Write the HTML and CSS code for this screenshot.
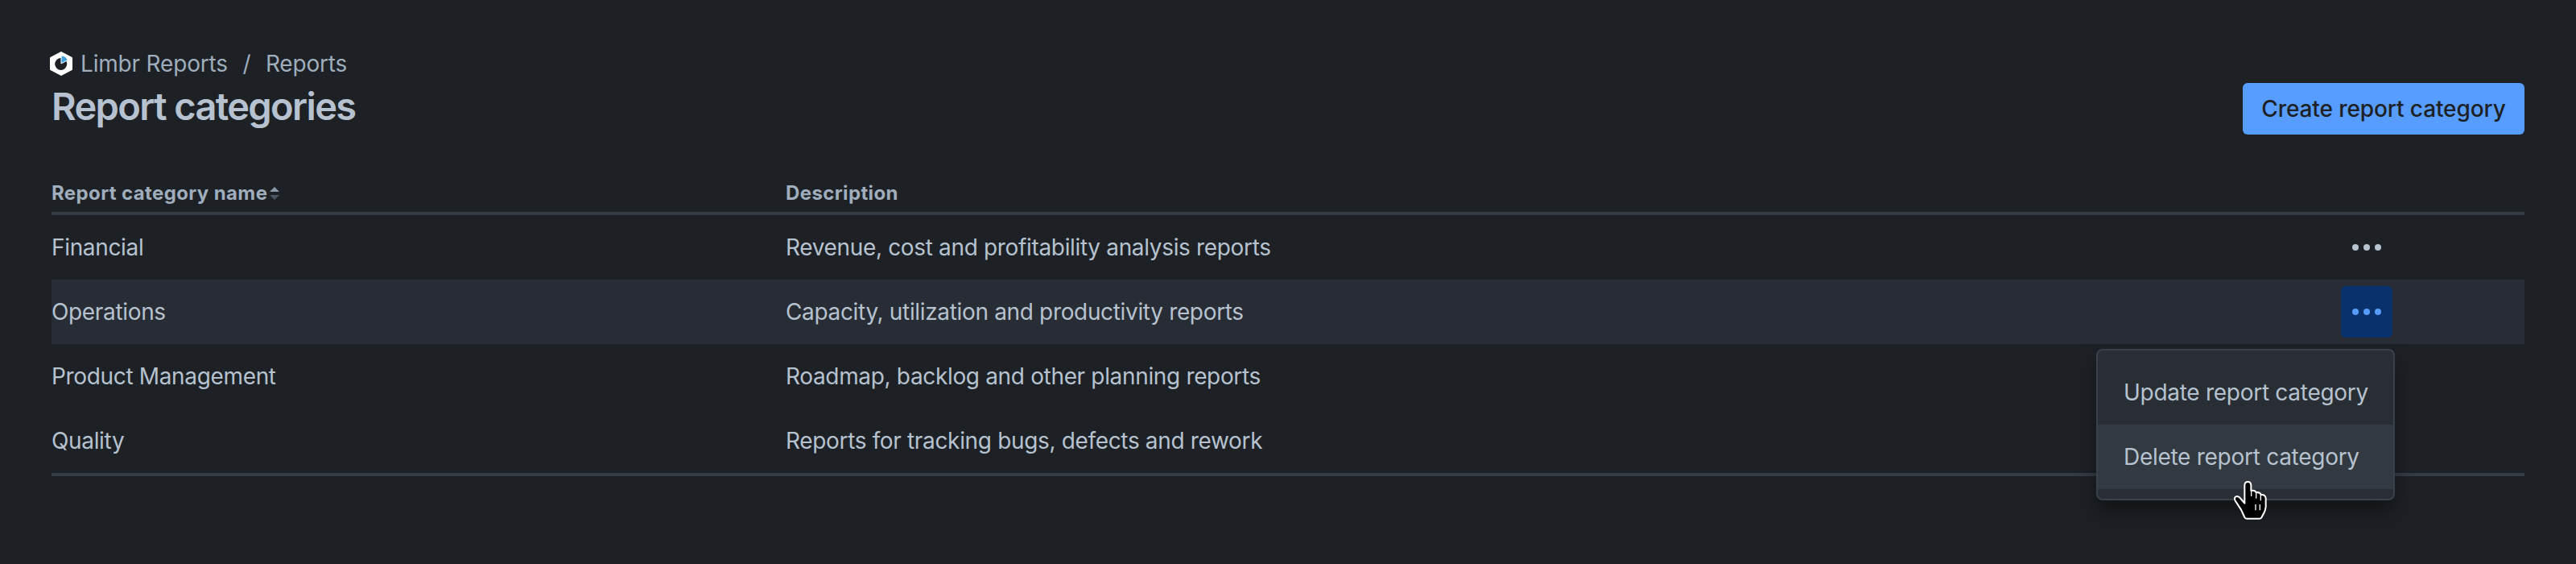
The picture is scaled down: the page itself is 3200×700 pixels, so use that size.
FILE: index.html
```html
<!DOCTYPE html>
<html lang="en">
<head>
    <meta charset="UTF-8">
    <meta name="viewport" content="width=device-width, initial-scale=1.0">
    <title>Report categories</title>
    <link rel="stylesheet" href="styles.css">
</head>
<body>
    <div class="page">
        <header class="page-header">
            <div>
                <nav class="breadcrumbs">
                    <svg class="logo" viewBox="0 0 28 30" width="28" height="30">
                        <path d="M14 0.5 L27.5 7.5 V22.5 L14 29.5 L0.5 22.5 V7.5 Z" fill="#fff" stroke="#fff" stroke-linejoin="round"/>
                        <circle cx="13.7" cy="15.5" r="7.5" fill="#1d2125"/>
                        <path d="M14 15 V5 A9.5 9.5 0 0 1 22.3 10.5 Z" fill="#3fa2db" stroke="#fff" stroke-width="1"/>
                    </svg>
                    <a class="crumb">Limbr Reports</a>
                    <span class="slash">/</span>
                    <a class="crumb">Reports</a>
                </nav>
                <h1>Report categories</h1>
            </div>
            <button class="create-btn">Create report category</button>
        </header>

        <div class="table">
            <div class="row head">
                <div class="name">
                    <span>Report category name</span>
                    <svg class="sort" viewBox="0 0 12 16" width="12" height="16">
                        <path d="M6 0 L12 6 H0 Z" fill="#8c9bab"/>
                        <path d="M0 10 H12 L6 16 Z" fill="#4a545e"/>
                    </svg>
                </div>
                <div class="description">Description</div>
            </div>
            <div class="row">
                <div class="name">Financial</div>
                <div class="description">Revenue, cost and profitability analysis reports</div>
                <button class="more" aria-label="More actions"><i></i><i></i><i></i></button>
            </div>
            <div class="row hovered">
                <div class="name">Operations</div>
                <div class="description">Capacity, utilization and productivity reports</div>
                <button class="more selected" aria-label="More actions"><i></i><i></i><i></i></button>
            </div>
            <div class="row">
                <div class="name">Product Management</div>
                <div class="description">Roadmap, backlog and other planning reports</div>
            </div>
            <div class="row">
                <div class="name">Quality</div>
                <div class="description">Reports for tracking bugs, defects and rework</div>
            </div>
        </div>
    </div>

    <div class="menu">
        <div class="menu-item">Update report category</div>
        <div class="menu-item active">Delete report category</div>
    </div>

    <svg class="cursor" viewBox="42 42 138 162" width="46" height="54">
        <path d="M85 134 V66 Q86 54 97 54 Q108 54 109 66 V87 Q124 84 128 94 Q142 91 146 102 Q163 101 164 116 V146 Q163 160 157 170 L148 187 Q145 191 140 191 H93 Q87 191 85 186 L72 158 L50 124 Q45 115 51 110 Q59 105 68 114 Z" fill="#000" stroke="#fff" stroke-width="6" stroke-linejoin="round"/>
        <path d="M110 86 V108 M128 94 V116 M145 102 V124 M126 138 V160 M142 138 V160" fill="none" stroke="#fff" stroke-width="4"/>
    </svg>
</body>
</html>
```
FILE: styles.css
```css
* {
    box-sizing: border-box;
}
body {
    margin: 0;
    height: 700px;
    overflow: hidden;
    background-color: #1d2125;
    color: #b6c2cf;
    font-family: Inter, sans-serif;
    font-size: 28px;
    line-height: 40px;
}
.page {
    padding: 59px 64px 0;
}
.page-header {
    display: flex;
    justify-content: space-between;
    height: 150px;
}
.breadcrumbs {
    display: flex;
    align-items: center;
    height: 40px;
    margin-left: -2px;
    color: #9fadbc;
    letter-spacing: -0.18px;
}
.logo {
    margin-right: 10px;
}
.slash {
    width: 47px;
    text-align: center;
}
h1 {
    margin: 5px 0 0;
    font-size: 47px;
    line-height: 56px;
    font-weight: 600;
    letter-spacing: -1.65px;
}
.create-btn {
    width: 350px;
    height: 64px;
    margin-top: 44px;
    padding: 0;
    border: none;
    border-radius: 6px;
    background-color: #579dff;
    color: #1d2125;
    font: 500 28px/64px Inter, sans-serif;
    letter-spacing: -0.1px;
}
.table {
    border-bottom: 4px solid #333b43;
    letter-spacing: -0.34px;
}
.row {
    display: flex;
    align-items: center;
    height: 80px;
}
.row.head {
    height: 58px;
    padding-top: 7px;
    border-bottom: 4px solid #333b43;
    color: #9fadbc;
    font-size: 24px;
    font-weight: 700;
    letter-spacing: 0.38px;
}
.row.hovered {
    background-color: #282c34;
}
.name {
    display: flex;
    align-items: center;
    width: 912px;
}
.description {
    width: 1932px;
}
.sort {
    margin-left: 3px;
}
.more {
    display: flex;
    align-items: center;
    justify-content: center;
    gap: 6px;
    width: 64px;
    height: 64px;
    padding: 0;
    border: none;
    border-radius: 6px;
    background: none;
    color: #b6c2cf;
}
.more i {
    width: 8px;
    height: 8px;
    border-radius: 50%;
    background-color: currentColor;
}
.more.selected {
    background-color: #09326c;
    color: #579dff;
}
.menu {
    position: absolute;
    left: 2604px;
    top: 433px;
    width: 371px;
    padding: 12px 0;
    border: 2px solid #39424b;
    border-radius: 8px;
    background-color: #282e33;
    box-shadow: 0 16px 24px rgba(3, 4, 4, 0.36);
    letter-spacing: -0.28px;
}
.menu-item {
    padding: 20px 32px;
    height: 80px;
    white-space: nowrap;
}
.menu-item.active {
    background-color: #323940;
}
.cursor {
    position: absolute;
    left: 2774px;
    top: 594px;
}
```
